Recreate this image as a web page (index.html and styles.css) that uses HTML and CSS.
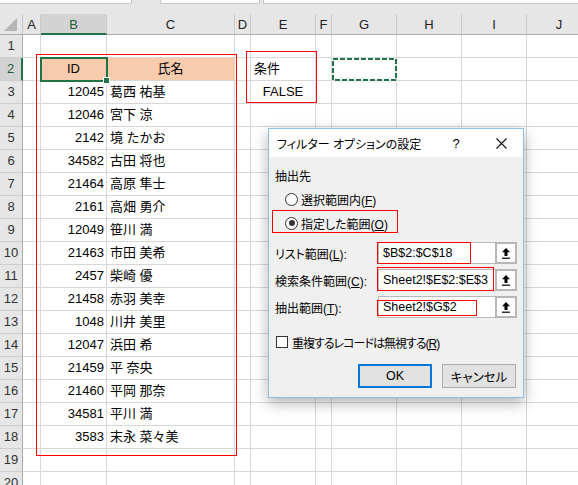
FILE: index.html
```html
<!DOCTYPE html>
<html lang="ja">
<head>
<meta charset="utf-8">
<title>フィルター オプションの設定</title>
<link rel="stylesheet" href="styles.css">
</head>
<body>
<div class="topbar"><div class="tb tb1"></div><div class="tb tb2"></div><div class="tb tb3"></div></div>
<div class="sheet">
  <div class="row hdr"><div class="corner"><span class="tri"></span></div><div class="ch">A</div><div class="ch sel">B</div><div class="ch">C</div><div class="ch">D</div><div class="ch">E</div><div class="ch">F</div><div class="ch">G</div><div class="ch">H</div><div class="ch">I</div><div class="ch">J</div></div>
  <div class="row"><div class="rh">1</div><div class="c"></div><div class="c"></div><div class="c"></div><div class="c"></div><div class="c"></div><div class="c"></div><div class="c"></div><div class="c"></div><div class="c"></div><div class="c"></div></div>
  <div class="row"><div class="rh rsel">2</div><div class="c"></div><div class="c ctr fill">ID</div><div class="c ctr fill">氏名</div><div class="c"></div><div class="c txt">条件</div><div class="c"></div><div class="c"></div><div class="c"></div><div class="c"></div><div class="c"></div></div>
  <div class="row"><div class="rh">3</div><div class="c"></div><div class="c num">12045</div><div class="c txt">葛西 祐基</div><div class="c"></div><div class="c ctr">FALSE</div><div class="c"></div><div class="c"></div><div class="c"></div><div class="c"></div><div class="c"></div></div>
  <div class="row"><div class="rh">4</div><div class="c"></div><div class="c num">12046</div><div class="c txt">宮下 涼</div><div class="c"></div><div class="c"></div><div class="c"></div><div class="c"></div><div class="c"></div><div class="c"></div><div class="c"></div></div>
  <div class="row"><div class="rh">5</div><div class="c"></div><div class="c num">2142</div><div class="c txt">境 たかお</div><div class="c"></div><div class="c"></div><div class="c"></div><div class="c"></div><div class="c"></div><div class="c"></div><div class="c"></div></div>
  <div class="row"><div class="rh">6</div><div class="c"></div><div class="c num">34582</div><div class="c txt">古田 将也</div><div class="c"></div><div class="c"></div><div class="c"></div><div class="c"></div><div class="c"></div><div class="c"></div><div class="c"></div></div>
  <div class="row"><div class="rh">7</div><div class="c"></div><div class="c num">21464</div><div class="c txt">高原 隼士</div><div class="c"></div><div class="c"></div><div class="c"></div><div class="c"></div><div class="c"></div><div class="c"></div><div class="c"></div></div>
  <div class="row"><div class="rh">8</div><div class="c"></div><div class="c num">2161</div><div class="c txt">高畑 勇介</div><div class="c"></div><div class="c"></div><div class="c"></div><div class="c"></div><div class="c"></div><div class="c"></div><div class="c"></div></div>
  <div class="row"><div class="rh">9</div><div class="c"></div><div class="c num">12049</div><div class="c txt">笹川 満</div><div class="c"></div><div class="c"></div><div class="c"></div><div class="c"></div><div class="c"></div><div class="c"></div><div class="c"></div></div>
  <div class="row"><div class="rh">10</div><div class="c"></div><div class="c num">21463</div><div class="c txt">市田 美希</div><div class="c"></div><div class="c"></div><div class="c"></div><div class="c"></div><div class="c"></div><div class="c"></div><div class="c"></div></div>
  <div class="row"><div class="rh">11</div><div class="c"></div><div class="c num">2457</div><div class="c txt">柴崎 優</div><div class="c"></div><div class="c"></div><div class="c"></div><div class="c"></div><div class="c"></div><div class="c"></div><div class="c"></div></div>
  <div class="row"><div class="rh">12</div><div class="c"></div><div class="c num">21458</div><div class="c txt">赤羽 美幸</div><div class="c"></div><div class="c"></div><div class="c"></div><div class="c"></div><div class="c"></div><div class="c"></div><div class="c"></div></div>
  <div class="row"><div class="rh">13</div><div class="c"></div><div class="c num">1048</div><div class="c txt">川井 美里</div><div class="c"></div><div class="c"></div><div class="c"></div><div class="c"></div><div class="c"></div><div class="c"></div><div class="c"></div></div>
  <div class="row"><div class="rh">14</div><div class="c"></div><div class="c num">12047</div><div class="c txt">浜田 希</div><div class="c"></div><div class="c"></div><div class="c"></div><div class="c"></div><div class="c"></div><div class="c"></div><div class="c"></div></div>
  <div class="row"><div class="rh">15</div><div class="c"></div><div class="c num">21459</div><div class="c txt">平 奈央</div><div class="c"></div><div class="c"></div><div class="c"></div><div class="c"></div><div class="c"></div><div class="c"></div><div class="c"></div></div>
  <div class="row"><div class="rh">16</div><div class="c"></div><div class="c num">21460</div><div class="c txt">平岡 那奈</div><div class="c"></div><div class="c"></div><div class="c"></div><div class="c"></div><div class="c"></div><div class="c"></div><div class="c"></div></div>
  <div class="row"><div class="rh">17</div><div class="c"></div><div class="c num">34581</div><div class="c txt">平川 満</div><div class="c"></div><div class="c"></div><div class="c"></div><div class="c"></div><div class="c"></div><div class="c"></div><div class="c"></div></div>
  <div class="row"><div class="rh">18</div><div class="c"></div><div class="c num">3583</div><div class="c txt">末永 菜々美</div><div class="c"></div><div class="c"></div><div class="c"></div><div class="c"></div><div class="c"></div><div class="c"></div><div class="c"></div></div>
  <div class="row"><div class="rh">19</div><div class="c"></div><div class="c"></div><div class="c"></div><div class="c"></div><div class="c"></div><div class="c"></div><div class="c"></div><div class="c"></div><div class="c"></div><div class="c"></div></div>
  <div class="row"><div class="rh">20</div><div class="c"></div><div class="c"></div><div class="c"></div><div class="c"></div><div class="c"></div><div class="c"></div><div class="c"></div><div class="c"></div><div class="c"></div><div class="c"></div></div>
</div>

<div class="selbox"><span class="handle"></span></div>
<div class="redbox rb-list"></div>
<div class="redbox rb-crit"></div>
<svg class="marquee" width="65" height="23" viewBox="0 0 65 23"><rect x="1" y="1" width="63" height="21" fill="none" stroke="#217346" stroke-width="2" stroke-dasharray="5 2"/></svg>

<div class="dialog">
  <div class="titlebar">
    <span class="title">フィルター オプションの設定</span>
    <span class="help">?</span>
    <span class="close"><svg width="11" height="11" viewBox="0 0 11 11"><path d="M0.5 0.5 L10.5 10.5 M10.5 0.5 L0.5 10.5" stroke="#111" stroke-width="1.1" fill="none"/></svg></span>
  </div>
  <div class="dbody">
    <div class="line">抽出先</div>
    <div class="line radio-line"><span class="radio"></span><span>選択範囲内(<u>F</u>)</span></div>
    <div class="line radio-line"><span class="radio on"></span><span>指定した範囲(<u>O</u>)</span></div>
    <div class="field f1"><span class="flabel">リスト範囲(<u>L</u>):</span><span class="input">$B$2:$C$18</span><span class="pick"><svg width="8" height="11" viewBox="0 0 8 11"><path d="M4 0 L8 4.2 L5.5 4.2 L5.5 8 L2.5 8 L2.5 4.2 L0 4.2 Z" fill="#000"/><rect x="0" y="9.6" width="8" height="1.2" fill="#000"/></svg></span></div>
    <div class="field"><span class="flabel">検索条件範囲(<u>C</u>):</span><span class="input">Sheet2!$E$2:$E$3</span><span class="pick"><svg width="8" height="11" viewBox="0 0 8 11"><path d="M4 0 L8 4.2 L5.5 4.2 L5.5 8 L2.5 8 L2.5 4.2 L0 4.2 Z" fill="#000"/><rect x="0" y="9.6" width="8" height="1.2" fill="#000"/></svg></span></div>
    <div class="field"><span class="flabel">抽出範囲(<u>T</u>):</span><span class="input">Sheet2!$G$2</span><span class="pick"><svg width="8" height="11" viewBox="0 0 8 11"><path d="M4 0 L8 4.2 L5.5 4.2 L5.5 8 L2.5 8 L2.5 4.2 L0 4.2 Z" fill="#000"/><rect x="0" y="9.6" width="8" height="1.2" fill="#000"/></svg></span></div>
    <div class="line check-line"><span class="check"></span><span class="tight">重複するレコードは無視する(<u>R</u>)</span></div>
    <div class="buttons"><span class="btn ok">OK</span><span class="btn">キャンセル</span></div>
  </div>
  <div class="redbox rd-radio"></div>
  <div class="redbox rd-in1"></div>
  <div class="redbox rd-in2"></div>
  <div class="redbox rd-in3"></div>
</div>
</body>
</html>
```

FILE: styles.css
```css
html, body {
  margin: 0;
  padding: 0;
}
body {
  position: relative;
  width: 578px;
  height: 485px;
  overflow: hidden;
  background: #e6e6e6;
  font-family: "Liberation Sans", "Noto Sans CJK JP", sans-serif;
  color: #000;
}

/* top strip */
.topbar {
  display: flex;
  height: 14px;
}
.tb {
  height: 3px;
  background: #fff;
  border-bottom: 1px solid #c6c6c6;
}
.tb1 { width: 131px; border-right: 1px solid #c6c6c6; }
.tb2 { width: 98px; margin-left: 28px; border-left: 1px solid #c6c6c6; border-right: 1px solid #c6c6c6; }
.tb3 { flex: 1; margin-left: 3px; border-left: 1px solid #c6c6c6; }

/* sheet grid */
.sheet {
  width: 592px;
}
.row {
  display: grid;
  grid-template-columns: 23px 18px 66px 128px 16px 65px 16px 65px 65px 65px 65px;
  height: 23px;
}
.row.hdr {
  height: 21px;
}
.row > div {
  box-sizing: border-box;
  white-space: nowrap;
  overflow: hidden;
}
.corner {
  position: relative;
  background: #e6e6e6;
  border-right: 1px solid #c6c6c6;
  border-bottom: 1px solid #ababab;
}
.tri {
  position: absolute;
  right: 5px;
  bottom: 3px;
  width: 0;
  height: 0;
  border-left: 13px solid transparent;
  border-bottom: 13px solid #b5b5b5;
}
.ch {
  background: #e6e6e6;
  border-right: 1px solid #c9c9c9;
  border-bottom: 1px solid #ababab;
  text-align: center;
  font-size: 13px;
  line-height: 21px;
  color: #222;
}
.ch.sel {
  background: #d3d3d3;
  border-bottom: 2px solid #217346;
  color: #1f5f38;
}
.rh {
  background: #e6e6e6;
  border-right: 1px solid #ababab;
  border-bottom: 1px solid #cdcdcd;
  text-align: center;
  font-size: 13px;
  line-height: 22px;
  color: #333;
}
.rh.rsel {
  background: #d3d3d3;
  border-right: 2px solid #217346;
  color: #1f5f38;
}
.c {
  background: #fff;
  border-right: 1px solid #d7d7d7;
  border-bottom: 1px solid #d7d7d7;
  font-size: 13px;
  line-height: 22px;
}
.num { text-align: right; padding-right: 2px; }
.txt { padding-left: 3px; }
.ctr { text-align: center; }
.fill { background: #f8cbad; border-right-color: #f8cbad; }

/* overlays on the sheet */
.selbox {
  position: absolute;
  left: 40px;
  top: 57px;
  width: 68px;
  height: 25px;
  box-sizing: border-box;
  border: 2px solid #217346;
}
.handle {
  position: absolute;
  right: -4px;
  bottom: -4px;
  width: 5px;
  height: 5px;
  background: #217346;
  border: 1px solid #fff;
}
.redbox {
  position: absolute;
  box-sizing: border-box;
  border: 1px solid #ff0000;
}
.rb-list { left: 36px; top: 54px; width: 201px; height: 402px; }
.rb-crit { left: 246px; top: 51px; width: 71px; height: 52px; }
.marquee {
  position: absolute;
  left: 332px;
  top: 58px;
}

/* dialog */
.dialog {
  position: absolute;
  left: 268px;
  top: 128px;
  width: 256px;
  height: 270px;
  box-sizing: border-box;
  border: 1px solid #8cc2ea;
  background: #f0f0f0;
  box-shadow: 0 5px 14px rgba(0, 0, 0, 0.3);
  font-size: 12px;
  font-feature-settings: "palt";
  color: #000;
}
.titlebar {
  display: flex;
  align-items: center;
  height: 28px;
  padding-left: 8px;
  padding-right: 10px;
  background: #fff;
}
.title {
  flex: 1;
  font-size: 12px;
}
.help {
  width: 20px;
  text-align: center;
  font-size: 13px;
  margin-right: 23px;
}
.close {
  width: 24px;
  display: flex;
  justify-content: center;
}
.dbody {
  display: flex;
  flex-direction: column;
  padding: 6px 0 0 6px;
}
.line {
  display: flex;
  align-items: center;
  height: 24px;
}
.radio-line .radio {
  margin-left: 10px;
  margin-right: 3px;
}
.radio {
  position: relative;
  width: 13px;
  height: 13px;
  box-sizing: border-box;
  border: 1px solid #333;
  border-radius: 50%;
  background: #fff;
}
.radio.on::after {
  content: "";
  position: absolute;
  left: 2.5px;
  top: 2.5px;
  width: 6px;
  height: 6px;
  border-radius: 50%;
  background: #333;
}
.field {
  display: flex;
  align-items: center;
  height: 22px;
  margin-top: 5px;
}
.field.f1 {
  margin-top: 7px;
}
.flabel {
  width: 103px;
}
.input {
  box-sizing: border-box;
  width: 117px;
  height: 22px;
  padding-left: 4px;
  background: #fff;
  border: 1px solid #b9b9b9;
  border-right: none;
  font-size: 12.5px;
  line-height: 20px;
  white-space: nowrap;
  overflow: hidden;
}
.pick {
  box-sizing: border-box;
  width: 22px;
  height: 22px;
  border: 2px solid #b7b7b7;
  background: #fdfdfd;
  display: flex;
  align-items: center;
  justify-content: center;
}
.check-line {
  margin-top: 12px;
}
.check {
  width: 12px;
  height: 12px;
  box-sizing: border-box;
  border: 1px solid #333;
  background: #fff;
  margin-left: 1px;
  margin-right: 4px;
}
.tight {
  letter-spacing: -1px;
}
.buttons {
  display: flex;
  justify-content: flex-end;
  gap: 10px;
  margin-top: 10px;
  padding-right: 7px;
}
.btn {
  box-sizing: border-box;
  width: 74px;
  height: 24px;
  border: 1px solid #adadad;
  background: #e1e1e1;
  display: flex;
  align-items: center;
  justify-content: center;
  font-size: 12.5px;
}
.btn.ok {
  border: 2px solid #0078d7;
}
.rd-radio { left: 3px; top: 81px; width: 126px; height: 23px; }
.rd-in1 { left: 108px; top: 113px; width: 94px; height: 22px; }
.rd-in2 { left: 108px; top: 138px; width: 117px; height: 24px; }
.rd-in3 { left: 108px; top: 171px; width: 100px; height: 16px; }
```
